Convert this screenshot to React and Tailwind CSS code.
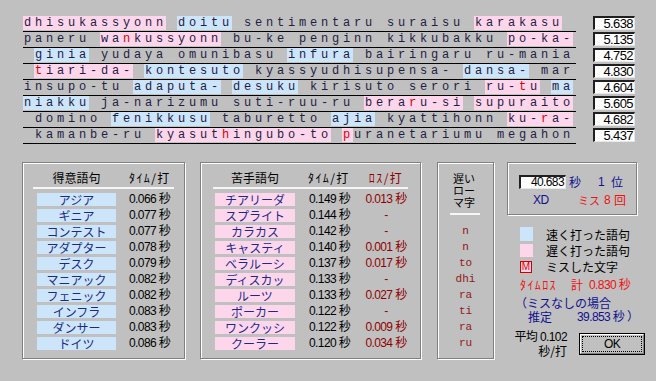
import React from 'react';

const ROWS = [
  '[p:dhisukassyonn] [b:doitu] sentimentaru suraisu [p:karakasu]',
  'paneru [p:wa*nkussyonn] bu-ke penginn kikkubakku [p:po-ka-]',
  '_[b:ginia] yudaya omunibasu [b:infura] bairingaru ru-mania',
  '_[p:*tiari-da-] [b:kontesuto] kyassyudhisupensa- [b:dansa-] mar',
  'insupo-tu [b:adaputa-] [b:desuku] kirisuto serori [p:ru-*tu] [b:ma]',
  '[b:niakku] ja-narizumu suti-ruu-ru [p:bera*ru-si] [p:supuraito]',
  '_domino [b:fenikkusu] taburetto [b:ajia] kyattihonn [p:ku-*ra-]',
  '_kamanbe-ru [p:kyasut*hingubo-to] [p:*p]uranetariumu megahon',
];

const SCORES = ['5.638', '5.135', '4.752', '4.830', '4.604', '5.605', '4.682', '5.437'];

const GOOD = [
  ['アジア', '0.066'],
  ['ギニア', '0.077'],
  ['コンテスト', '0.077'],
  ['アダプター', '0.078'],
  ['デスク', '0.079'],
  ['マニアック', '0.082'],
  ['フェニック', '0.082'],
  ['インフラ', '0.083'],
  ['ダンサー', '0.083'],
  ['ドイツ', '0.086'],
];

const BAD = [
  ['チアリーダ', '0.149', '0.013'],
  ['スプライト', '0.144', null],
  ['カラカス', '0.142', null],
  ['キャスティ', '0.140', '0.001'],
  ['ベラルーシ', '0.137', '0.017'],
  ['ディスカッ', '0.133', null],
  ['ルーツ', '0.133', '0.027'],
  ['ポーカー', '0.122', null],
  ['ワンクッシ', '0.122', '0.009'],
  ['クーラー', '0.120', '0.034'],
];

const SLOW = ['n', 'n', 'to', 'dhi', 'ra', 'ti', 'ra', 'ru'];

// row markup -> one cell per letter: [p:..] slow word, [b:..] fast word, '*' mistyped letter, '_' leading blank
const toCells = (s) => {
  const cells = [];
  let bg = null;
  let red = false;
  for (let i = 0; i < s.length; i++) {
    const ch = s[i];
    if (ch === '[') {
      bg = s[i + 1];
      i += 2;
      continue;
    }
    if (ch === ']') {
      bg = null;
      continue;
    }
    if (ch === '*') {
      red = true;
      continue;
    }
    cells.push({ ch: ch === '_' ? ' ' : ch, bg, red });
    red = false;
  }
  return cells;
};

const Group = ({ className, children }) => (
  <div className={`border border-[#808080] shadow-[inset_1px_1px_0_#ffffff,1px_1px_0_#ffffff] ${className}`}>
    {children}
  </div>
);

const jp = "font-['Noto_Sans_CJK_JP',sans-serif]";
const num = "font-['Liberation_Sans','Noto_Sans_CJK_JP',sans-serif] tracking-[-0.6px]";
const half = 'text-[12px] tracking-[1.4px]';

const App = () => {
  return (
    <div className={`relative h-[381px] w-[656px] overflow-hidden bg-[#c0c0c0] text-[12px] text-black ${jp}`}>
      {/* typed text */}
      <div className="flex pl-[23px] pt-[16px]">
        <div className="w-[553px] font-['Liberation_Mono',monospace] text-[12px] text-[#1e2040]">
          {ROWS.map((row, i) => (
            <div key={i} className="h-[16px]">
              <div className="flex h-[14px] leading-[14px]">
                {toCells(row).map((c, j) => (
                  <span
                    key={j}
                    className={`h-[14px] w-[11px] shrink-0 whitespace-pre pl-px ${
                      c.bg === 'p' ? 'bg-[#fdd6ec]' : c.bg === 'b' ? 'bg-[#cde5fb]' : ''
                    } ${c.red ? 'text-[#e00000]' : ''}`}
                  >
                    {c.ch}
                  </span>
                ))}
              </div>
              <div className="mt-px h-px w-[553px] bg-black" />
            </div>
          ))}
        </div>
        <div className="ml-[17px]">
          {SCORES.map((s) => (
            <div key={s} className="h-[16px]">
              <div className="h-[14px] w-[42px] border-b border-l-2 border-r border-t-2 border-b-[#e8e8e8] border-l-[#202020] border-r-[#e8e8e8] border-t-[#202020] bg-white pr-[1px] text-right font-['Liberation_Sans',sans-serif] text-[13px] leading-[11px] tracking-[-0.6px]">
                {s}
              </div>
            </div>
          ))}
        </div>
      </div>

      {/* result panels */}
      <div className="mt-[18px] flex pl-[22px]">
        <Group className="h-[197px] w-[163px]">
          <div className="pt-[8px]">
            <div className="flex h-[14px] leading-[14px]">
              <div className="ml-[14px] w-[79px] text-center">得意語句</div>
              <div className={`ml-[13px] ${half}`}>ﾀｲﾑ/打</div>
            </div>
            <div className="ml-[10px] mt-[2px] h-[2px] w-[141px] bg-[#f6f6f6]" />
            <div className="mt-[4px]">
              {GOOD.map(([w, t], i) => (
                <div key={i} className="flex h-[16px]">
                  <div className="ml-[14px] h-[13px] w-[79px] bg-[#cde5fb] text-center leading-[13px] text-[#1a2a8a]">{w}</div>
                  <div className={`ml-[13px] leading-[13px] ${num}`}>{t} 秒</div>
                </div>
              ))}
            </div>
          </div>
        </Group>

        <Group className="ml-[15px] h-[197px] w-[221px]">
          <div className="pt-[8px]">
            <div className="flex h-[14px] leading-[14px]">
              <div className="ml-[14px] w-[80px] text-center">苦手語句</div>
              <div className={`ml-[13px] w-[55px] ${half}`}>ﾀｲﾑ/打</div>
              <div className={`w-[46px] text-center text-[#900000] ${half}`}>ﾛｽ/打</div>
            </div>
            <div className="ml-[12px] mt-[2px] h-[2px] w-[195px] bg-[#f6f6f6]" />
            <div className="mt-[4px]">
              {BAD.map(([w, t, l], i) => (
                <div key={i} className="flex h-[16px]">
                  <div className="ml-[14px] h-[13px] w-[80px] bg-[#fdd6ec] text-center leading-[13px] text-[#1a2a8a]">{w}</div>
                  <div className={`ml-[14px] w-[54px] leading-[13px] ${num}`}>{t} 秒</div>
                  <div className={`w-[46px] text-center leading-[13px] text-[#900000] ${num}`}>{l ? `${l} 秒` : '-'}</div>
                </div>
              ))}
            </div>
          </div>
        </Group>

        <Group className="ml-[16px] h-[197px] w-[57px]">
          <div className="pt-[9px]">
            <div className="ml-[15px] text-[11px] leading-[12px]">
              <div>遅い</div>
              <div>ロー</div>
              <div>マ字</div>
            </div>
            <div className="ml-[12px] mt-[5px] h-[2px] w-[30px] bg-[#f6f6f6]" />
            <div className="mt-[8px] font-['Liberation_Mono',monospace] text-[11px] text-[#901818]">
              {SLOW.map((s, i) => (
                <div key={i} className="h-[16px] text-center leading-[16px]">
                  {s}
                </div>
              ))}
            </div>
          </div>
        </Group>

        <div className="ml-[13px] w-[149px]">
          <Group className="h-[53px] w-[130px]">
            <div className="pl-[11px] pt-[12px]">
              <div className="flex h-[14px] items-center">
                <div className={`h-[14px] w-[47px] border-b border-l-2 border-r border-t-2 border-b-[#e8e8e8] border-l-[#202020] border-r-[#e8e8e8] border-t-[#202020] bg-white pr-[1px] text-right leading-[11px] ${num}`}>
                  40.683
                </div>
                <div className="ml-[3px] text-[#101090]">秒</div>
                <div className={`ml-[17px] text-[#101090] ${num}`}>1</div>
                <div className="ml-[7px] text-[#101090]">位</div>
              </div>
              <div className="mt-[4px] flex h-[14px] items-center">
                <div className={`ml-[14px] w-[45px] text-[#101090] ${num}`}>XD</div>
                <div className="text-[11px] text-[#ee1010]">ミス</div>
                <div className={`ml-[4px] text-[#ee1010] ${num}`}>8</div>
                <div className="ml-[4px] text-[#ee1010]">回</div>
              </div>
            </div>
          </Group>

          <div className="mt-[12px] pl-[13px]">
            <div className="flex h-[16px] items-start">
              <div className="h-[14px] w-[13px] bg-[#cde5fb]" />
              <div className="ml-[13px] leading-[15px]">速く打った語句</div>
            </div>
            <div className="flex h-[16px] items-start">
              <div className="mt-px h-[13px] w-[13px] bg-[#fdd6ec]" />
              <div className="ml-[13px] leading-[15px]">遅く打った語句</div>
            </div>
            <div className="flex h-[16px] items-start">
              <div className="mt-[2px] flex h-[12px] w-[12px] items-center justify-center border border-[#d00000] bg-[#fdd6ec] font-['Liberation_Sans',sans-serif] text-[10px] leading-none text-[#e00000]">
                M
              </div>
              <div className="ml-[14px] leading-[15px]">ミスした文字</div>
            </div>
          </div>

          <div className="mt-[3px] flex h-[14px] items-center pl-[13px] leading-[14px] text-[#ee1010]">
            <span className={half}>ﾀｲﾑﾛｽ</span>
            <span className="ml-[14px]">計</span>
            <span className={`ml-[6px] ${num}`}>0.830 秒</span>
          </div>
          <div className="mt-[4px] h-[14px] pl-[8px] leading-[14px] text-[#101090]">（ミスなしの場合</div>
          <div className="flex h-[14px] items-center pl-[21px] leading-[14px] text-[#101090]">
            <span>推定</span>
            <span className={`ml-[25px] ${num}`}>39.853 秒 ）</span>
          </div>

          <div className="mt-[7px] flex">
            <div className="ml-[5px] w-[55px] text-right leading-[13px]">
              <div className={num}>平均 0.102</div>
              <div>秒/打</div>
            </div>
            <div className="ml-[12px] mt-[2px] h-[22px] w-[66px] border border-black">
              <div className="h-full w-full border border-b-[#808080] border-l-white border-r-[#808080] border-t-white p-[1px]">
                <div className={`flex h-full w-full items-center justify-center border border-dotted border-black leading-none ${num}`}>
                  OK
                </div>
              </div>
            </div>
          </div>
        </div>
      </div>
    </div>
  );
};

export default App;
